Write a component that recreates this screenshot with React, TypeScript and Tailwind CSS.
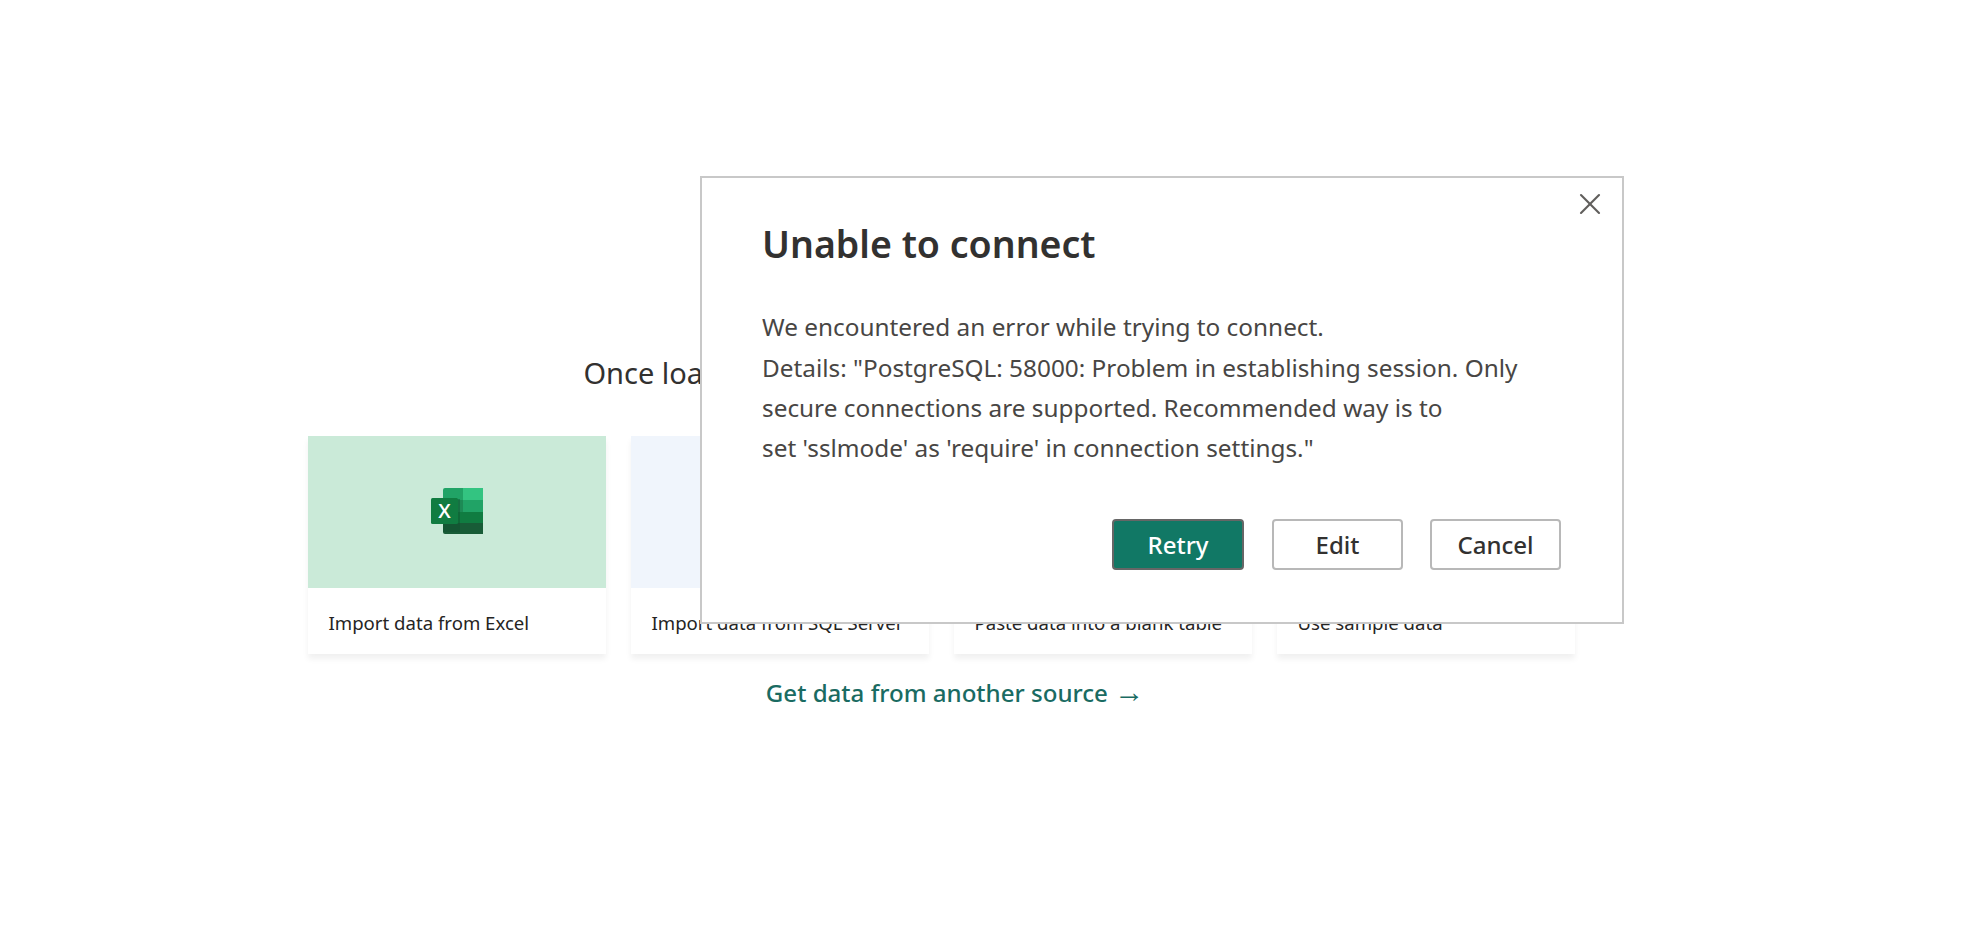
import { X } from 'lucide-react';

const cards = [
  { label: 'Import data from Excel', tint: 'bg-[#caead8]', excel: true },
  { label: 'Import data from SQL Server', tint: 'bg-[#f0f5fc]', excel: false },
  { label: 'Paste data into a blank table', tint: 'bg-[#f0f5fc]', excel: false },
  { label: 'Use sample data', tint: 'bg-[#fdf3d8]', excel: false },
];

function ExcelLogo() {
  return (
    <svg width="52" height="46" viewBox="0 0 52 46" className="-mt-[2px]">
      <path d="M14 0h22v12H12V2a2 2 0 0 1 2-2z" fill="#21a366" />
      <rect x="32" y="0" width="20" height="12" fill="#33c481" />
      <rect x="12" y="12" width="20" height="12" fill="#1d8a55" />
      <rect x="32" y="12" width="20" height="12" fill="#21a366" />
      <rect x="12" y="24" width="20" height="11" fill="#107c41" />
      <rect x="32" y="24" width="20" height="11" fill="#107c41" />
      <path d="M12 35h40v11H14a2 2 0 0 1-2-2z" fill="#185c37" />
      <rect x="12" y="11" width="17" height="33" fill="#0f4f2e" opacity="0.45" />
      <rect x="0" y="10" width="27" height="26" rx="1.5" fill="#107c41" />
      <text x="13.5" y="30" textAnchor="middle" fill="#ffffff" className="font-semibold text-[20px] font-['Open_Sans',sans-serif]">X</text>
    </svg>
  );
}

export default function App() {
  return (
    <div className="relative h-[928px] bg-white font-['Noto_Sans','Open_Sans',sans-serif] overflow-hidden">
      {/* Page behind the dialog */}
      <div className="flex flex-col items-center pt-[354px] pr-[84px]">
        <p className="text-[29px] leading-[38px] text-[#323130] whitespace-nowrap">
          Once loaded, your data will appear in the Data pane.
        </p>
        <div className="mt-[44px] flex gap-[25px]">
          {cards.map((card) => (
            <div key={card.label} className="w-[298px] h-[218px] bg-white shadow-[0_5px_6px_rgba(0,0,0,0.06)]">
              <div className={`h-[152px] flex items-center justify-center ${card.tint}`}>
                {card.excel && <ExcelLogo />}
              </div>
              <div className="pl-[21px] pt-[22px] text-[18.6px] leading-[26px] text-[#252423] whitespace-nowrap">{card.label}</div>
            </div>
          ))}
        </div>
        <a className="mt-[22px] ml-[28px] h-[34px] text-[24.1px] leading-[34px] font-medium text-[#1a6b62] whitespace-nowrap">
          Get data from another source <span className="text-[30px] leading-[30px] font-['Liberation_Sans',sans-serif]">→</span>
        </a>
      </div>

      {/* Error dialog */}
      <div className="absolute left-[700px] top-[176px] w-[924px] h-[448px] bg-white border-2 border-[#c8c8c8] pl-[60px]">
        <button className="absolute right-[14px] top-[8px] text-[#605e5c]">
          <X size={36} strokeWidth={1.4} />
        </button>
        <h1 className="pt-[37px] text-[37.5px] leading-[58px] font-semibold text-[#323130]">Unable to connect</h1>
        <div className="mt-[34px] text-[24.35px] leading-[40px] text-[#484644]">
          <p>We encountered an error while trying to connect.</p>
          <p className="mt-px">
            Details: "PostgreSQL: 58000: Problem in establishing session. Only<br />
            secure connections are supported. Recommended way is to<br />
            set 'sslmode' as 'require' in connection settings."
          </p>
        </div>
        <div className="absolute right-[61px] bottom-[52px] flex">
          <button className="w-[132px] h-[51px] rounded-[4px] bg-[#117865] border-2 border-[#666666] text-[24px] font-medium text-white">Retry</button>
          <button className="ml-[28px] w-[131px] h-[51px] rounded-[4px] bg-white border-2 border-[#b8b8b8] text-[24px] font-medium text-[#323130]">Edit</button>
          <button className="ml-[27px] w-[131px] h-[51px] rounded-[4px] bg-white border-2 border-[#b8b8b8] text-[24px] font-medium text-[#323130]">Cancel</button>
        </div>
      </div>
    </div>
  );
}
